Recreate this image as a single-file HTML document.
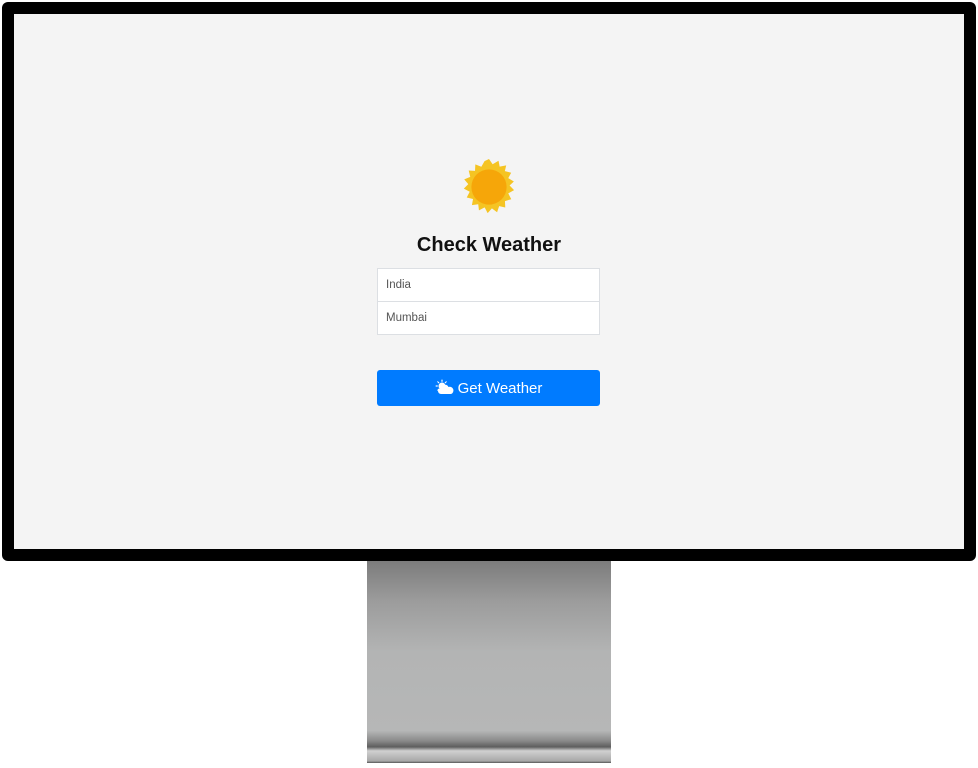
<!DOCTYPE html>
<html><head><style>
html,body{margin:0;padding:0;background:#fff;width:978px;height:768px;overflow:hidden;font-family:"Liberation Sans",sans-serif}
.frame{position:absolute;left:2px;top:2px;width:974px;height:559px;background:#000;border-radius:6px}
.screen{position:absolute;left:14px;top:14px;width:950px;height:535px;background:#f4f4f4}
.stand{position:absolute;left:367px;top:561px;width:244px;height:202px;background:linear-gradient(#7c7c7c 0%,#9c9c9c 20%,#b3b4b4 45%,#b6b7b7 84%,#8a8a8a 89%,#5e5e5e 92%,#d0d0d0 94%,#a8a8a8 99%,#555 100%)}
h1{position:absolute;left:0;width:978px;top:234px;margin:0;text-align:center;font-size:20px;font-weight:bold;color:#111}
.in{position:absolute;left:377px;background:#fff;border:1px solid #dcdfe3;font-size:11.5px;color:#555;line-height:32px;padding-left:8px;box-sizing:border-box;width:223px;height:34px}
.btn{position:absolute;left:377px;top:370px;width:223px;height:36px;background:#007bff;border-radius:3px;color:#fff;font-size:15px;text-align:center;line-height:38px}
</style></head><body>
<div class="frame"></div>
<div class="screen"></div>
<div class="stand"></div>
<svg style="position:absolute;left:460px;top:158px" width="58" height="58" viewBox="-28 -28 56 56">
<polygon fill="#f5c423" points="
0,-27 3.5,-22 9.2,-25.4 10.3,-19.7 16.6,-20.9 15.3,-15.3 21.4,-13.8 18.6,-8.6 24,-5.3 19.9,-1.4 24.2,3 18.6,6.2 21.5,11.8 15.4,13.6 15.7,19.8 9.8,18.5 7.8,24.4 2.8,20.6 -1.3,25.2 -4.2,19.7 -9.7,22.6 -10.4,16.6 -16.5,17.5 -15.4,11.6 -21.5,10.1 -18.6,4.6 -24.3,1.6 -20,-2.8 -23.9,-7.4 -18.1,-9.8 -19.6,-15.9 -13.5,-15.6 -13.2,-21.9 -7.4,-19.5 -4.3,-25"/>
<circle r="17" fill="#f6a609"/>
</svg>
<h1>Check Weather</h1>
<div class="in" style="top:268px">India</div>
<div class="in" style="top:301px">Mumbai</div>
<div class="btn"><svg width="20" height="16" viewBox="0 0 20 16" style="vertical-align:-2px;margin-right:3px"><g fill="#fff"><circle cx="7" cy="7" r="3.5"/><path d="M7 0l1 2.5h-2zM0 7l2.5-1v2zM2 2l2.5 1.2-1.3 1.3zM12 2l-1.2 2.5-1.3-1.3zM2 12l1.2-2.5 1.3 1.3z"/><path d="M6 15a3 3 0 0 1 0-6a4 4 0 0 1 7.5-1a3.5 3.5 0 0 1 2.5 7z"/></g></svg>Get Weather</div>
</body></html>
